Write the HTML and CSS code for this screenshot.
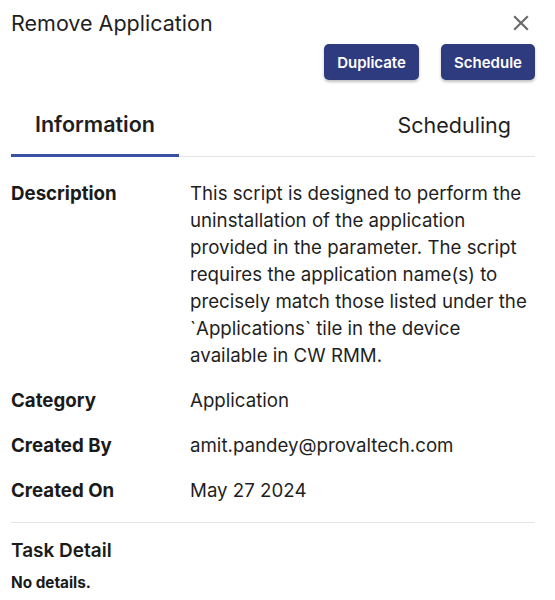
FILE: index.html
```html
<!DOCTYPE html>
<html>
<head>
<meta charset="utf-8">
<link rel="stylesheet" href="styles.css">
</head>
<body>
<div class="panel">
  <div class="header">
    <div class="title">Remove Application</div>
    <button class="close" aria-label="close">
      <svg width="26" height="26" viewBox="0 0 24 24"><path d="M19 6.41 17.59 5 12 10.59 6.41 5 5 6.41 10.59 12 5 17.59 6.41 19 12 13.41 17.59 19 19 17.59 13.41 12z" fill="#6b6b6b"/></svg>
    </button>
  </div>
  <div class="actions">
    <button class="btn">Duplicate</button>
    <button class="btn">Schedule</button>
  </div>
  <div class="tabs">
    <div class="tab active">Information</div>
    <div class="tab">Scheduling</div>
  </div>
  <div class="rows">
    <div class="row">
      <div class="label">Description</div>
      <div class="value">This script is designed to perform the uninstallation of the application provided in the parameter. The script requires the application name(s) to precisely match those listed under the `Applications` tile in the device available in CW RMM.</div>
    </div>
    <div class="row">
      <div class="label">Category</div>
      <div class="value">Application</div>
    </div>
    <div class="row">
      <div class="label">Created By</div>
      <div class="value">amit.pandey@provaltech.com</div>
    </div>
    <div class="row">
      <div class="label">Created On</div>
      <div class="value">May 27 2024</div>
    </div>
  </div>
  <div class="divider"></div>
  <div class="task-title">Task Detail</div>
  <div class="task-body">No details.</div>
</div>
</body>
</html>
```
FILE: styles.css
```css
* { box-sizing: border-box; }
html, body { margin: 0; padding: 0; background: #fff; }
body { font-family: Inter, "Noto Sans", sans-serif; color: #1a1a1a; }
.panel { width: 555px; padding: 0 20px 0 11px; }
.header { display: flex; justify-content: space-between; align-items: flex-start; padding-top: 10px; height: 36px; }
.title { font-size: 21.5px; line-height: 26px; color: #1f1f1f; }
.close { border: 0; background: none; padding: 0; margin-right: 1px; width: 26px; height: 26px; display: flex; }
.actions { display: flex; justify-content: flex-end; gap: 22px; margin-top: 8px; }
.btn { font-family: Inter, sans-serif; font-weight: 600; font-size: 15px; color: #fff; background: #2e3b7e; border: 0; border-radius: 5px; height: 36px; width: 95px; box-shadow: 0 2px 3px rgba(0,0,0,0.25); padding: 0; }
.actions .btn:last-child { width: 94px; }
.tabs { display: flex; justify-content: space-between; margin-top: 13px; height: 64px; box-shadow: inset 0 -1px 0 #e4e4e4; }
.tab { font-size: 21.5px; padding: 0 24px; display: flex; align-items: center; height: 64px; color: #1f1f1f; }
.tab.active { font-weight: 600; border-bottom: 3px solid #3a50a4; }
.rows { padding-top: 14px; }
.row { display: flex; padding: 9px 0; font-size: 18.7px; line-height: 27px; }
.label { width: 179px; flex: none; font-weight: 700; }
.value { flex: 1; color: #1f1f1f; }
.divider { height: 1px; background: #e4e4e4; margin-top: 9px; }
.task-title { font-size: 19px; font-weight: 600; margin-top: 14px; line-height: 27px; }
.task-body { font-size: 15.3px; font-weight: 700; line-height: 18px; margin-top: 10px; }
```
